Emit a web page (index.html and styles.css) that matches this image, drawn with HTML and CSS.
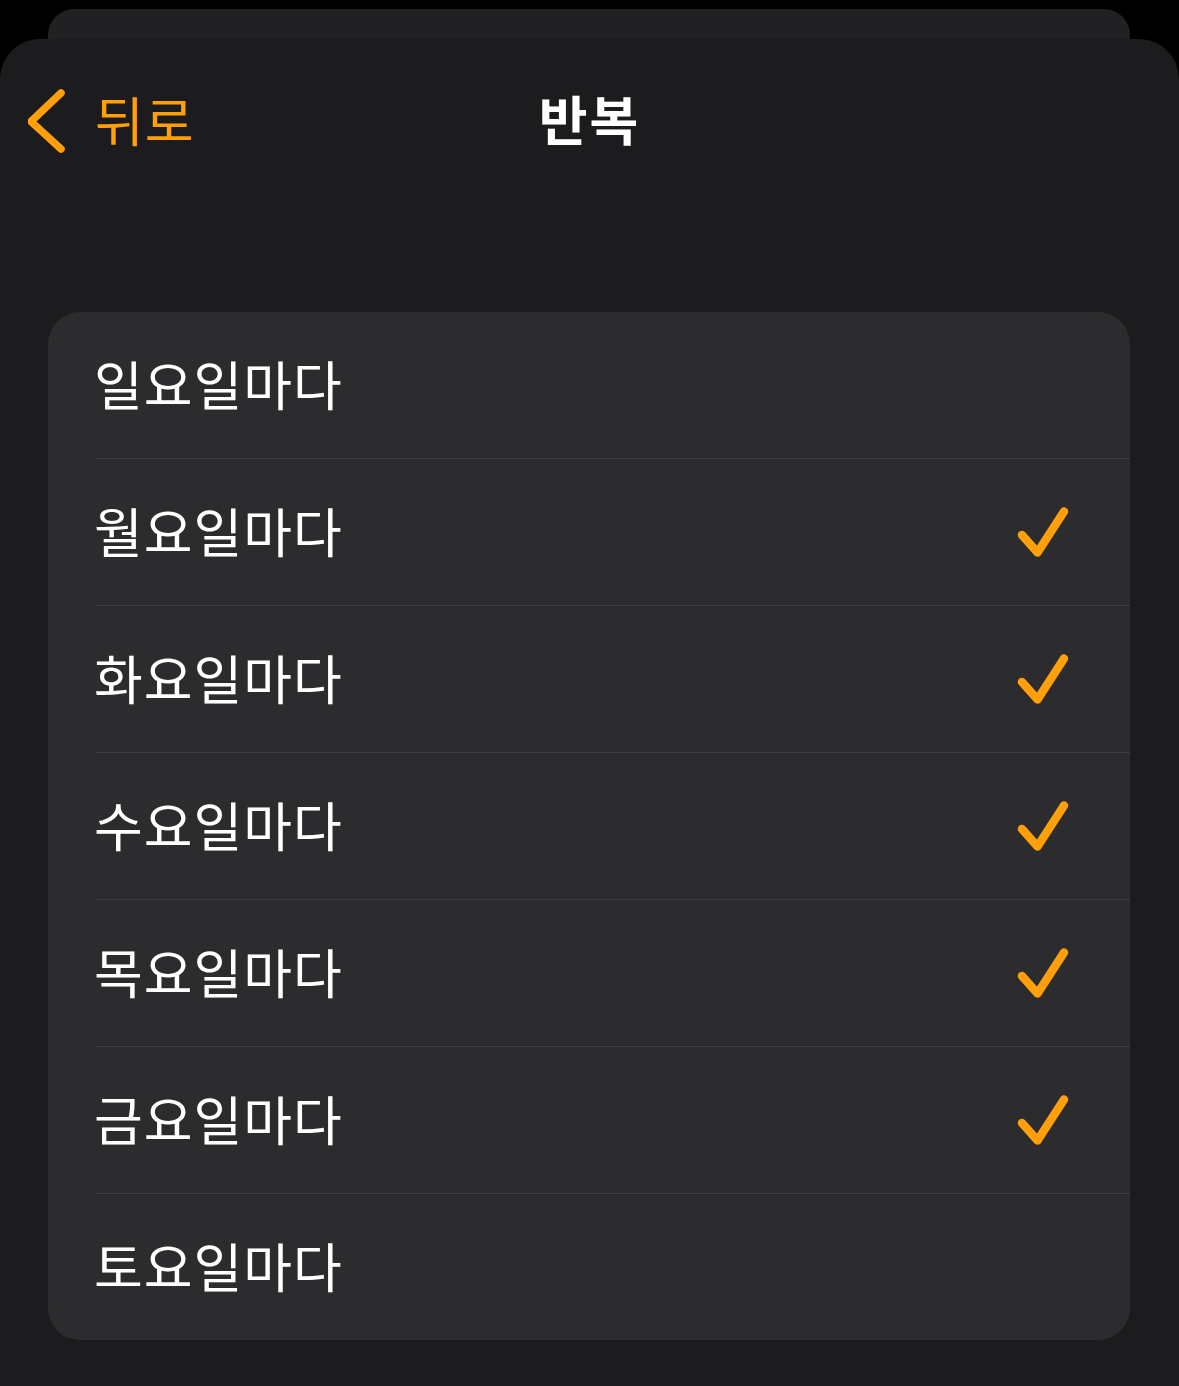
FILE: index.html
```html
<!DOCTYPE html>
<html lang="ko">
<head>
<meta charset="utf-8">
<title>반복</title>
<link rel="stylesheet" href="styles.css">
</head>
<body>
<div class="stack-card"></div>
<main class="sheet">
  <header class="nav">
    <div class="back">
      <svg class="chevron" width="44" height="70" viewBox="0 0 44 70" aria-hidden="true">
        <path d="M33 6 L3 34.5 L33 62" fill="none" stroke="#ff9f0a" stroke-width="7.5" stroke-linecap="round" stroke-linejoin="round"/>
      </svg>
      <span class="back-label">뒤로</span>
    </div>
    <h1 class="title">반복</h1>
    <div class="nav-spacer"></div>
  </header>
  <ul class="list">
    <li class="row"><span class="label">일요일마다</span></li>
    <li class="row"><span class="label">월요일마다</span><svg class="check" width="60" height="60" viewBox="0 0 60 60"><path d="M8 33 L23.5 50.5 L50 9.5" fill="none" stroke="#ff9f0a" stroke-width="8.5" stroke-linecap="round" stroke-linejoin="round"/></svg></li>
    <li class="row"><span class="label">화요일마다</span><svg class="check" width="60" height="60" viewBox="0 0 60 60"><path d="M8 33 L23.5 50.5 L50 9.5" fill="none" stroke="#ff9f0a" stroke-width="8.5" stroke-linecap="round" stroke-linejoin="round"/></svg></li>
    <li class="row"><span class="label">수요일마다</span><svg class="check" width="60" height="60" viewBox="0 0 60 60"><path d="M8 33 L23.5 50.5 L50 9.5" fill="none" stroke="#ff9f0a" stroke-width="8.5" stroke-linecap="round" stroke-linejoin="round"/></svg></li>
    <li class="row"><span class="label">목요일마다</span><svg class="check" width="60" height="60" viewBox="0 0 60 60"><path d="M8 33 L23.5 50.5 L50 9.5" fill="none" stroke="#ff9f0a" stroke-width="8.5" stroke-linecap="round" stroke-linejoin="round"/></svg></li>
    <li class="row"><span class="label">금요일마다</span><svg class="check" width="60" height="60" viewBox="0 0 60 60"><path d="M8 33 L23.5 50.5 L50 9.5" fill="none" stroke="#ff9f0a" stroke-width="8.5" stroke-linecap="round" stroke-linejoin="round"/></svg></li>
    <li class="row"><span class="label">토요일마다</span></li>
  </ul>
</main>
</body>
</html>
```

FILE: styles.css
```css
* { box-sizing: border-box; }

html, body {
  margin: 0;
  padding: 0;
  background: #000;
  height: 100%;
  overflow: hidden;
}

body {
  font-family: "Noto Sans CJK KR", "Noto Sans", sans-serif;
  color: #fff;
  padding-top: 9px;
}

.stack-card {
  height: 30px;
  margin: 0 49px 0 48px;
  background: #212123;
  border-radius: 26px 26px 0 0;
}

.sheet {
  background: #1c1c1e;
  border-radius: 40px 40px 0 0;
  height: 1360px;
  padding-top: 40px;
}

.nav {
  display: grid;
  grid-template-columns: 1fr auto 1fr;
  align-items: center;
  height: 80px;
}

.back {
  display: flex;
  align-items: center;
  padding-left: 28px;
  padding-top: 2px;
  color: #ff9f0a;
}

.chevron {
  display: block;
  margin-right: 23px;
  margin-top: 3px;
}

.back-label {
  font-size: 53px;
  line-height: 80px;
  font-weight: 400;
  letter-spacing: 1px;
  margin-top: -3px;
}

.title {
  margin: -3px 0 0;
  font-size: 53px;
  line-height: 80px;
  font-weight: 700;
  letter-spacing: 2px;
}

.list {
  list-style: none;
  margin: 153px 49px 0 48px;
  padding: 0;
  background: #2c2c2e;
  border-radius: 32px;
  overflow: hidden;
}

.row {
  display: flex;
  align-items: center;
  justify-content: space-between;
  height: 147px;
  margin-left: 48px;
  padding-right: 56px;
  border-bottom: 1px solid #3e3e41;
}

.row:last-child {
  border-bottom: none;
  height: 146px;
}

.label {
  font-size: 53px;
  line-height: 60px;
  font-weight: 400;
  letter-spacing: 1px;
  margin-left: -2px;
  margin-top: -4px;
}

.check {
  display: block;
}
```
